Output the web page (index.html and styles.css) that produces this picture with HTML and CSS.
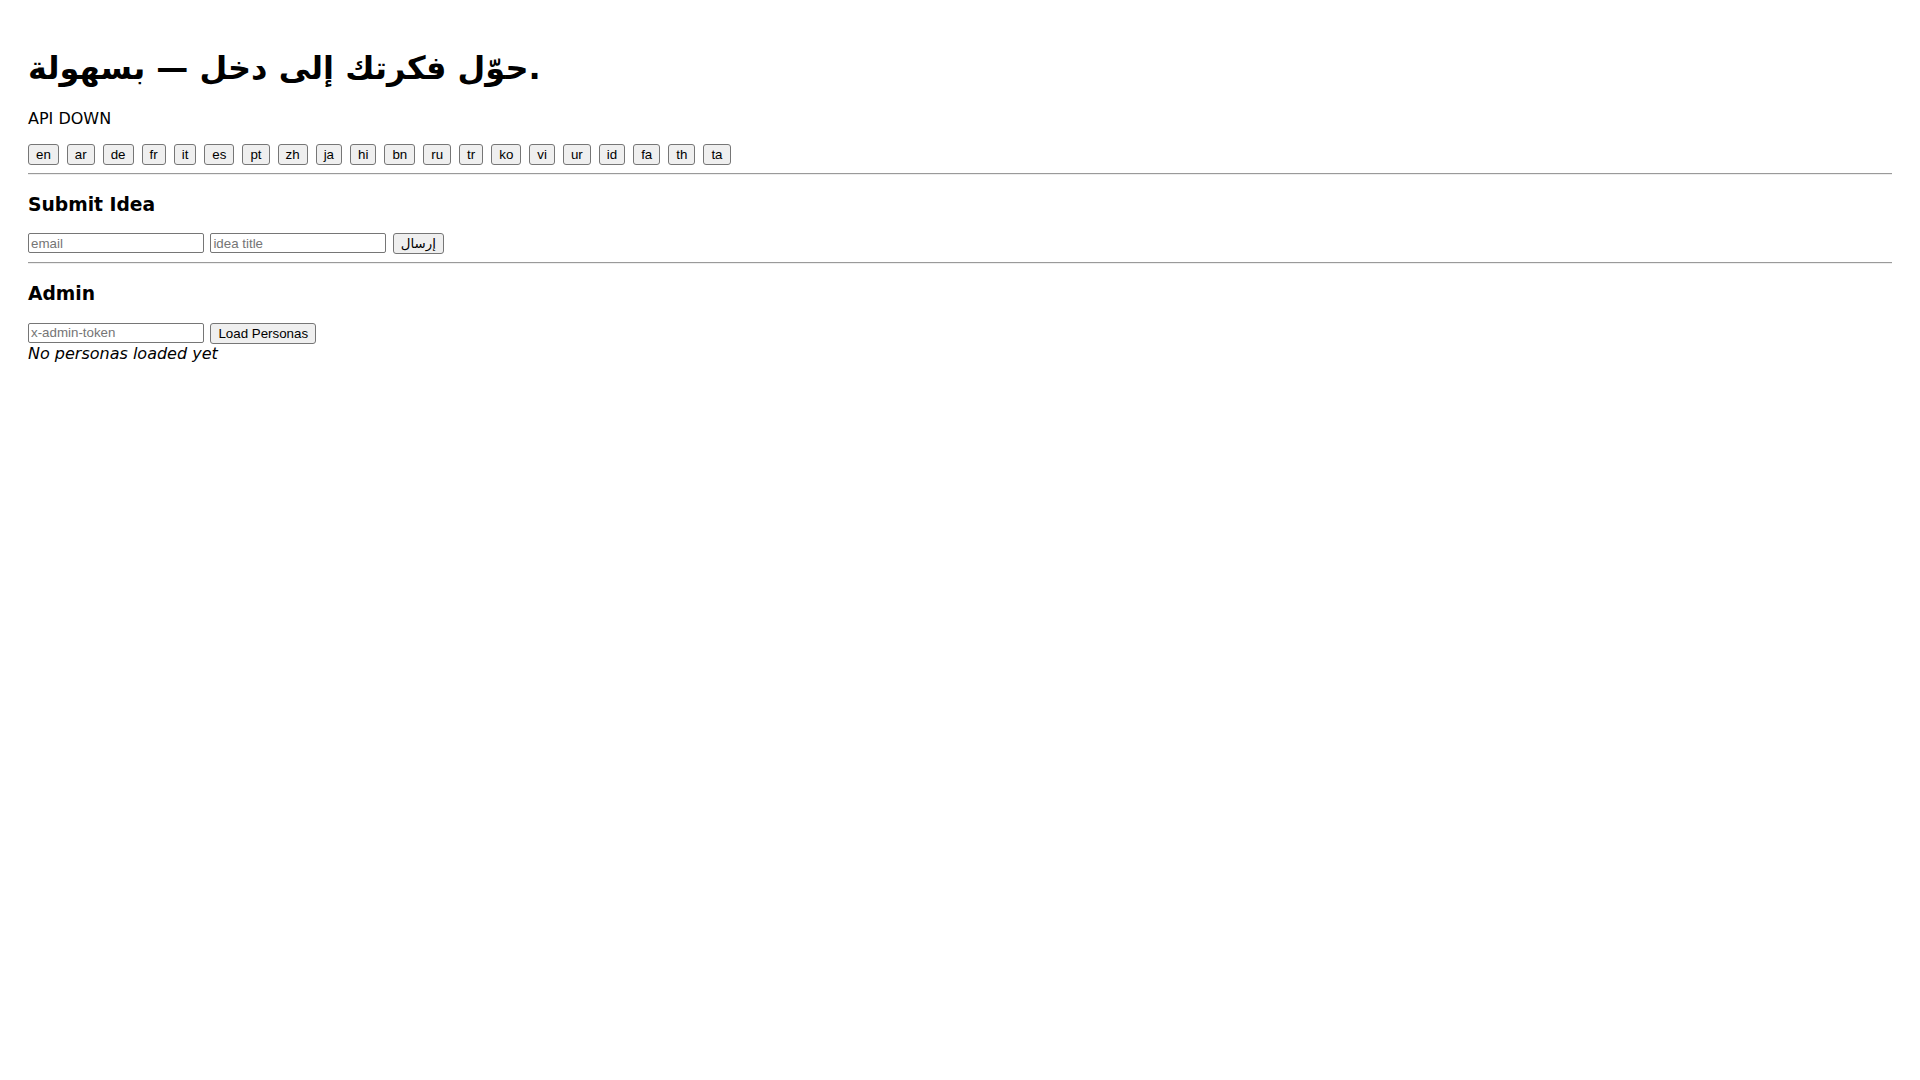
FILE: index.html
```html
<!DOCTYPE html>
<html lang="ar">
<head>
<meta charset="utf-8">
<title>Ideas</title>
<link rel="stylesheet" href="styles.css">
</head>
<body>
<div class="page">
  <h1 class="title" dir="ltr">حوّل فكرتك إلى دخل — بسهولة.</h1>
  <div class="status">API DOWN</div>
  <div class="langs">
    <button class="btn">en</button>
    <button class="btn">ar</button>
    <button class="btn">de</button>
    <button class="btn">fr</button>
    <button class="btn">it</button>
    <button class="btn">es</button>
    <button class="btn">pt</button>
    <button class="btn">zh</button>
    <button class="btn">ja</button>
    <button class="btn">hi</button>
    <button class="btn">bn</button>
    <button class="btn">ru</button>
    <button class="btn">tr</button>
    <button class="btn">ko</button>
    <button class="btn">vi</button>
    <button class="btn">ur</button>
    <button class="btn">id</button>
    <button class="btn">fa</button>
    <button class="btn">th</button>
    <button class="btn">ta</button>
  </div>
  <hr class="divider">
  <h3 class="section-title">Submit Idea</h3>
  <form class="row">
    <input class="field" type="email" placeholder="email">
    <input class="field" type="text" placeholder="idea title">
    <button class="btn" type="button">إرسال</button>
  </form>
  <hr class="divider">
  <h3 class="section-title">Admin</h3>
  <div class="row">
    <input class="field" type="text" placeholder="x-admin-token">
    <button class="btn" type="button">Load Personas</button>
  </div>
  <div class="empty">No personas loaded yet</div>
</div>
</body>
</html>
```

FILE: styles.css
```css
html, body {
  margin: 0;
  padding: 0;
  background: #ffffff;
}

body {
  font-family: "DejaVu Sans", sans-serif;
  font-size: 16px;
  color: #000000;
}

.page {
  padding: 28px;
}

.title {
  font-family: "DejaVu Sans", sans-serif;
  font-size: 32px;
  font-weight: bold;
  line-height: normal;
  margin: 21.44px 0;
}

.status {
  margin: 0;
  line-height: normal;
}

.langs {
  display: flex;
  flex-wrap: wrap;
  gap: 8px;
  margin-top: 16px;
}

.btn {
  box-sizing: border-box;
  height: 21px;
  padding: 1px 7px;
  margin: 0;
  font-family: "Liberation Sans", Arial, "DejaVu Sans", sans-serif;
  font-size: 13.333px;
  line-height: normal;
  color: #000000;
  background: #efefef;
  border: 1px solid #767676;
  border-radius: 3px;
}

.divider {
  height: 0;
  margin: 8px 0;
  border: none;
  border-top: 1px solid #9a9a9a;
  border-bottom: 1px solid #eeeeee;
}

.section-title {
  font-size: 18.72px;
  font-weight: bold;
  line-height: normal;
  margin: 18.72px 0;
}

.row {
  display: flex;
  align-items: flex-start;
  gap: 6.4px;
  margin: 0;
}

.field {
  box-sizing: border-box;
  width: 176px;
  height: 20px;
  margin: 0;
  padding: 1px 2px;
  font-family: "Liberation Sans", Arial, sans-serif;
  font-size: 13.333px;
  color: #000000;
  background: #ffffff;
  border: 1px solid #767676;
  border-radius: 2px;
}

.field::placeholder {
  color: #757575;
}

.empty {
  font-style: italic;
  line-height: normal;
  margin-top: 0;
}
```
